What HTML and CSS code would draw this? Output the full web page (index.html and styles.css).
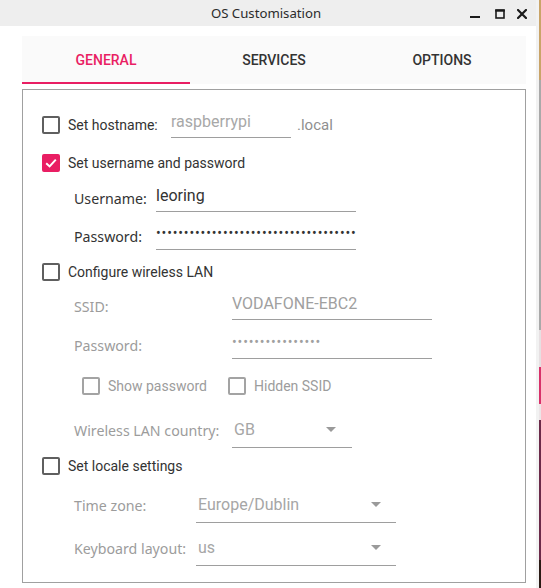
FILE: index.html
```html
<!DOCTYPE html>
<html lang="en">
<head>
<meta charset="utf-8">
<title>OS Customisation</title>
<link rel="stylesheet" href="styles.css">
</head>
<body>
<div class="screen">
  <div class="window">
    <header class="titlebar">
      <span class="title">OS Customisation</span>
      <div class="controls">
        <svg class="ctl" width="10" height="10" viewBox="0 0 10 10"><rect x="0" y="7" width="10" height="2" fill="#1b1b1b"/></svg>
        <svg class="ctl" width="10" height="10" viewBox="0 0 10 10"><rect x="1" y="1.5" width="8" height="7.5" fill="none" stroke="#1b1b1b" stroke-width="1.6"/><rect x="0.2" y="0.2" width="9.6" height="2.4" fill="#1b1b1b"/></svg>
        <svg class="ctl" width="10" height="10" viewBox="0 0 10 10"><path d="M1 1 L9 9 M9 1 L1 9" stroke="#1b1b1b" stroke-width="2.2" stroke-linecap="square"/></svg>
      </div>
    </header>

    <nav class="tabs">
      <div class="tab active">GENERAL</div>
      <div class="tab">SERVICES</div>
      <div class="tab">OPTIONS</div>
    </nav>

    <section class="panel">
      <div class="row">
        <span class="cb"></span>
        <span class="cb-label host-label">Set hostname:</span>
        <span class="field host-field placeholder">raspberrypi</span>
        <span class="suffix">.local</span>
      </div>

      <div class="row sp12">
        <span class="cb checked"><svg width="14" height="14" viewBox="0 0 14 14"><path d="M2.2 7.2 L5.6 10.4 L11.8 3.6" fill="none" stroke="#fff" stroke-width="2"/></svg></span>
        <span class="cb-label">Set username and password</span>
      </div>

      <div class="row sub sp10">
        <span class="flabel w-user">Username:</span>
        <span class="field user-field">leoring</span>
      </div>

      <div class="row sub sp12">
        <span class="flabel w-user">Password:</span>
        <span class="field user-field dots">••••••••••••••••••••••••••••••••••••</span>
      </div>

      <div class="row sp9">
        <span class="cb"></span>
        <span class="cb-label">Configure wireless LAN</span>
      </div>

      <div class="row sub sp9">
        <span class="flabel w-wifi muted">SSID:</span>
        <span class="field wifi-field muted-value">VODAFONE-EBC2</span>
      </div>

      <div class="row sub sp13">
        <span class="flabel w-wifi muted">Password:</span>
        <span class="field wifi-field dots muted-value">••••••••••••••••</span>
      </div>

      <div class="row sub2 sp14">
        <div class="check-group">
          <span class="cb disabled"></span>
          <span class="cb-label muted">Show password</span>
        </div>
        <div class="check-group">
          <span class="cb disabled"></span>
          <span class="cb-label muted">Hidden SSID</span>
        </div>
      </div>

      <div class="row sub sp19">
        <span class="flabel w-wifi muted">Wireless LAN country:</span>
        <span class="combo country">GB<span class="arrow"></span></span>
      </div>

      <div class="row sp9">
        <span class="cb"></span>
        <span class="cb-label">Set locale settings</span>
      </div>

      <div class="row sub sp14">
        <span class="flabel w-locale muted">Time zone:</span>
        <span class="combo locale">Europe/Dublin<span class="arrow"></span></span>
      </div>

      <div class="row sub sp17">
        <span class="flabel w-locale muted">Keyboard layout:</span>
        <span class="combo locale">us<span class="arrow"></span></span>
      </div>
    </section>
  </div>
  <div class="desktop"></div>
</div>
</body>
</html>
```

FILE: styles.css
```css
* { box-sizing: border-box; }

body {
  margin: 0;
  background: #ffffff;
  font-family: Roboto, "Liberation Sans", sans-serif;
}

.screen {
  display: flex;
  width: 541px;
  height: 588px;
  overflow: hidden;
}

.window {
  width: 536px;
  flex: none;
  background: #ffffff;
  display: flex;
  flex-direction: column;
}

.desktop {
  flex: 1;
  border-left: 3px solid #f2f2f2;
  background: linear-gradient(to bottom,
    #c9a468 0, #c9a468 80px,
    #a9a9a9 80px, #a9a9a9 330px,
    #e6e0e2 330px, #e6e0e2 367px,
    #d8316a 367px, #d8316a 404px,
    #ece6e8 404px, #ece6e8 420px,
    #6b2a49 420px, #6b2a49 560px,
    #2a1a14 560px);
}

/* title bar */
.titlebar {
  height: 26px;
  flex: none;
  background: #eeeeee;
  display: grid;
  grid-template-columns: 1fr auto 1fr;
  align-items: center;
}

.title {
  grid-column: 2;
  font-family: "Noto Sans", sans-serif;
  font-size: 13.2px;
  color: #2b2b2b;
  margin-right: 4px;
}

.controls {
  grid-column: 3;
  justify-self: end;
  display: flex;
  align-items: center;
  padding-right: 9px;
  margin-top: 1px;
}

.ctl { display: block; }
.ctl + .ctl { margin-left: 15px; }
.ctl:last-child { margin-left: 12px; }

/* tabs */
.tabs {
  margin: 10px 10px 0 22px;
  height: 48px;
  flex: none;
  background: #fafafa;
  display: grid;
  grid-template-columns: repeat(3, 1fr);
}

.tab {
  display: flex;
  align-items: center;
  justify-content: center;
  font-size: 14px;
  font-weight: 500;
  color: #333333;
}

.tab.active {
  color: #e91e63;
  box-shadow: inset 0 -2px 0 #e91e63;
}

/* content panel */
.panel {
  margin: 5px 10px 0 22px;
  height: 494px;
  flex: none;
  border: 1px solid #a0a0a0;
  padding: 22px 0 0 19px;
  display: flex;
  flex-direction: column;
}

.row {
  display: flex;
  align-items: center;
  height: 26px;
  flex: none;
}

.sp9 { margin-top: 9px; }
.sp10 { margin-top: 10px; }
.sp12 { margin-top: 12px; }
.sp13 { margin-top: 13px; }
.sp14 { margin-top: 14px; }
.sp17 { margin-top: 17px; }
.sp19 { margin-top: 19px; }

.sub { padding-left: 32px; }
.sub2 { padding-left: 40px; }

/* checkboxes */
.cb {
  width: 18px;
  height: 18px;
  flex: none;
  border: 2px solid #5f5f5f;
  border-radius: 2px;
  display: flex;
  align-items: center;
  justify-content: center;
}

.cb.checked {
  background: #e91e63;
  border-color: #e91e63;
}

.cb.disabled { border-color: #a3a3a3; }

.cb-label {
  margin-left: 8px;
  font-size: 14px;
  line-height: 20px;
  color: #333333;
  white-space: nowrap;
}

.host-label { width: 103px; flex: none; }

.check-group {
  display: flex;
  align-items: center;
  width: 146px;
}

/* form labels */
.flabel {
  font-family: "Noto Sans", sans-serif;
  font-size: 14.2px;
  line-height: 20px;
  color: #333333;
  flex: none;
  white-space: nowrap;
}

.w-user { width: 82px; }
.w-wifi { width: 158px; }
.w-locale { width: 122px; }

.muted { color: #9c9c9c; }

/* line edits */
.field {
  height: 25px;
  flex: none;
  border-bottom: 1px solid #9e9e9e;
  font-size: 16px;
  line-height: 17px;
  color: #333333;
  white-space: nowrap;
  overflow: hidden;
}

.host-field { width: 120px; }
.user-field { width: 200px; }
.wifi-field { width: 200px; }

.placeholder { color: #a8a8a8; }
.muted-value { color: #a0a0a0; }

.dots {
  font-size: 14px;
  letter-spacing: 0.85px;
  line-height: 16px;
}

.suffix {
  margin-left: 6px;
  font-size: 15px;
  color: #8f8f8f;
}

/* combo boxes */
.combo {
  height: 33px;
  flex: none;
  border-bottom: 1px solid #9e9e9e;
  display: flex;
  align-items: center;
  padding: 0 15px 2px 2px;
  font-size: 16px;
  color: #a6a6a6;
}

.country { width: 120px; padding-right: 16px; }
.locale { width: 200px; }

.arrow {
  margin-left: auto;
  width: 0;
  height: 0;
  border-left: 5px solid transparent;
  border-right: 5px solid transparent;
  border-top: 5px solid #9a9a9a;
}
```
